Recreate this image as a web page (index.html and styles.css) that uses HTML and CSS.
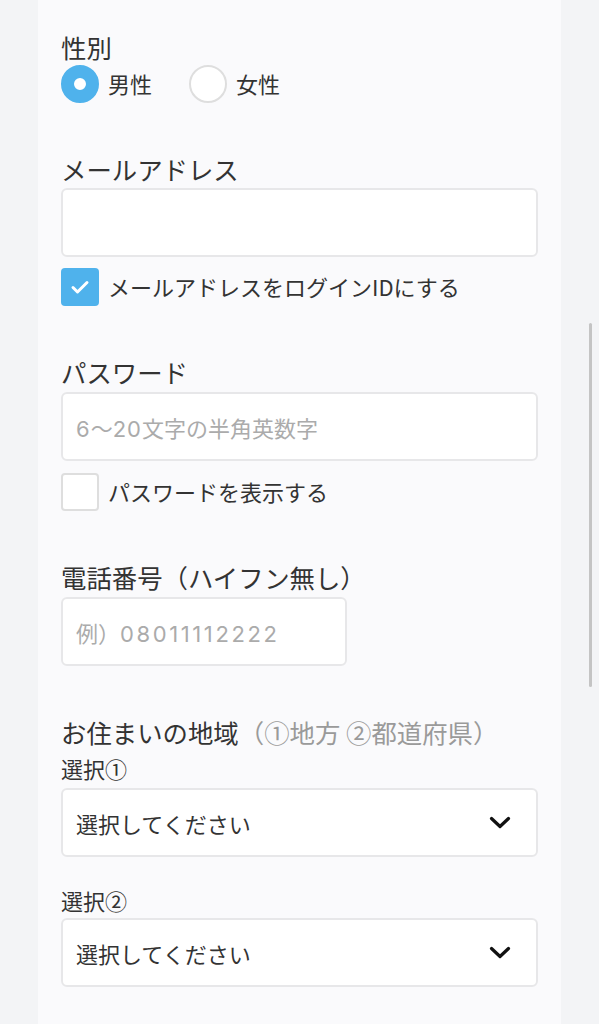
FILE: index.html
```html
<!DOCTYPE html>
<html lang="ja">
<head>
<meta charset="utf-8">
<title>登録フォーム</title>
<link rel="stylesheet" href="styles.css">
</head>
<body>
<div class="panel">
  <section class="section">
    <div class="field-label">性別</div>
    <div class="radio-row">
      <label class="choice">
        <span class="radio radio-on"></span>
        <span class="choice-text">男性</span>
      </label>
      <label class="choice">
        <span class="radio"></span>
        <span class="choice-text">女性</span>
      </label>
    </div>
  </section>

  <section class="section">
    <div class="field-label">メールアドレス</div>
    <div class="input"></div>
    <label class="check-row">
      <span class="checkbox checkbox-on">
        <svg width="38" height="38" viewBox="0 0 38 38"><polyline points="12,19.5 16.5,24 26,14.5" fill="none" stroke="#fff" stroke-width="3" stroke-linecap="round" stroke-linejoin="round"/></svg>
      </span>
      <span class="choice-text">メールアドレスをログインIDにする</span>
    </label>
  </section>

  <section class="section">
    <div class="field-label">パスワード</div>
    <div class="input"><span class="placeholder"><span class="num">6</span>〜<span class="num">20</span>文字の半角英数字</span></div>
    <label class="check-row">
      <span class="checkbox"></span>
      <span class="choice-text">パスワードを表示する</span>
    </label>
  </section>

  <section class="section">
    <div class="field-label">電話番号（ハイフン無し）</div>
    <div class="input input-short"><span class="placeholder">例）<span class="num num-wide">08011112222</span></span></div>
  </section>

  <section class="section">
    <div class="field-label">お住まいの地域<span class="muted">（①地方 ②都道府県）</span></div>
    <div class="sub-label">選択①</div>
    <div class="select">
      <span>選択してください</span>
      <svg class="chevron" width="22" height="14" viewBox="0 0 22 14"><polyline points="2.5,2.5 11,10.5 19.5,2.5" fill="none" stroke="#111" stroke-width="3.2" stroke-linecap="round" stroke-linejoin="round"/></svg>
    </div>
    <div class="sub-label sub-label-2">選択②</div>
    <div class="select">
      <span>選択してください</span>
      <svg class="chevron" width="22" height="14" viewBox="0 0 22 14"><polyline points="2.5,2.5 11,10.5 19.5,2.5" fill="none" stroke="#111" stroke-width="3.2" stroke-linecap="round" stroke-linejoin="round"/></svg>
    </div>
  </section>
</div>
<div class="scroll-indicator"></div>
</body>
</html>
```
FILE: styles.css
```css
html, body {
  margin: 0;
  padding: 0;
}
body {
  background: #f3f4f6;
  font-family: "Noto Sans CJK JP", "Noto Sans", sans-serif;
  color: #333;
  overflow: hidden;
}
.panel {
  width: 523px;
  min-height: 1024px;
  margin: 0 auto;
  box-sizing: border-box;
  padding: 31px 23px 37px;
  background: #fafafc;
}
.section + .section {
  margin-top: 50px;
}
.field-label {
  font-size: 25.4px;
  line-height: 32px;
  height: 32px;
  white-space: nowrap;
}
.muted {
  color: #9a9a9a;
}
.radio-row {
  display: flex;
  margin-top: 2px;
  gap: 37px;
}
.choice, .check-row {
  display: flex;
  align-items: center;
  gap: 9px;
}
.choice-text {
  font-size: 22px;
  line-height: 36px;
  padding-bottom: 2px;
}
.radio {
  width: 38px;
  height: 38px;
  box-sizing: border-box;
  border-radius: 50%;
  border: 2px solid #dedede;
  background: #fff;
}
.radio-on {
  border: 13px solid #4fb2ec;
}
.input {
  margin-top: 3px;
  height: 69px;
  box-sizing: border-box;
  border: 2px solid #e7e7e9;
  border-radius: 6px;
  background: #fff;
  padding: 0 13px;
  display: flex;
  align-items: center;
  font-size: 22px;
}
.section:nth-child(3) .input,
.section:nth-child(4) .input {
  margin-top: 4px;
}
.input-short {
  width: 286px;
}
.placeholder {
  color: #ababab;
  white-space: nowrap;
}
.num {
  font-family: Inter, "Noto Sans", sans-serif;
  letter-spacing: 1px;
}
.num-wide {
  letter-spacing: 2.6px;
}
.check-row {
  margin-top: 11px;
}
.section:nth-child(3) .check-row {
  margin-top: 12px;
}
.checkbox {
  width: 38px;
  height: 38px;
  box-sizing: border-box;
  border-radius: 4px;
  border: 2px solid #dedede;
  background: #fff;
  display: block;
}
.checkbox-on {
  border: none;
  background: #4fb2ec;
}
.checkbox svg {
  display: block;
}
.sub-label {
  margin-top: 6px;
  font-size: 22px;
  line-height: 28px;
}
.sub-label-2 {
  margin-top: 29px;
}
.select {
  margin-top: 6px;
  height: 69px;
  box-sizing: border-box;
  border: 2px solid #e7e7e9;
  border-radius: 6px;
  background: #fff;
  padding: 0 25px 0 13px;
  display: flex;
  align-items: center;
  justify-content: space-between;
  font-size: 22px;
  color: #333;
}
.sub-label-2 + .select {
  margin-top: 4px;
}
.chevron {
  display: block;
}
.scroll-indicator {
  position: absolute;
  left: 589px;
  top: 323px;
  width: 3px;
  height: 364px;
  border-radius: 2px;
  background: #c4c4c4;
}
```
